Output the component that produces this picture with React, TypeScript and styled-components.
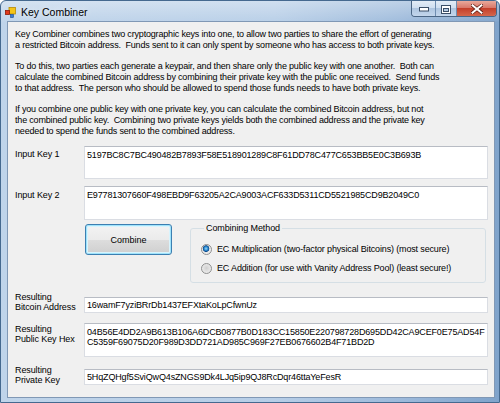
import { useState } from 'react';
import styled, { createGlobalStyle } from 'styled-components';

const FONT = `"Liberation Sans", Arial, sans-serif`;

const GlobalStyle = createGlobalStyle`
    html, body {
        margin: 0;
        padding: 0;
        background: #ffffff;
    }
    * { box-sizing: border-box; }
`;

const description = [
    'Key Combiner combines two cryptographic keys into one, to allow two parties to share the effort of generating',
    'a restricted Bitcoin address.  Funds sent to it can only spent by someone who has access to both private keys.',
    '',
    'To do this, two parties each generate a keypair, and then share only the public key with one another.  Both can',
    'calculate the combined Bitcoin address by combining their private key with the public one received.  Send funds',
    'to that address.  The person who should be allowed to spend those funds needs to have both private keys.',
    '',
    'If you combine one public key with one private key, you can calculate the combined Bitcoin address, but not',
    'the combined public key.  Combining two private keys yields both the combined address and the private key',
    'needed to spend the funds sent to the combined address.',
].join('\n');

const methods = [
    { id: 'mult', text: 'EC Multiplication (two-factor physical Bitcoins) (most secure)' },
    { id: 'add', text: 'EC Addition (for use with Vanity Address Pool) (least secure!)' },
];

const AppIcon = () => (
    <svg width="11" height="11" viewBox="0 0 11 11">
        <rect x="4" y="0.5" width="6.5" height="6.5" fill="#f5c518" stroke="#b78a06" strokeWidth="0.8" />
        <rect x="0.5" y="3.5" width="4" height="4" fill="#e2391c" stroke="#8d1a08" strokeWidth="0.8" />
        <rect x="5.5" y="7.5" width="3" height="3" fill="#3a7bd5" stroke="#1d4a8a" strokeWidth="0.6" />
    </svg>
);

const App = () => {
    const [method, setMethod] = useState('mult');

    return (
        <>
            <GlobalStyle />
            <StyledWindow>
                <StyledTitleBar>
                    <StyledTitleIcon><AppIcon /></StyledTitleIcon>
                    <StyledTitle>Key Combiner</StyledTitle>
                    <StyledCaption>
                        <StyledCaptionButton $w={24}>
                            <svg width="10" height="5" viewBox="0 0 10 5">
                                <rect x="0.5" y="0.5" width="9" height="3.5" fill="#fff" stroke="#3b4f68" strokeWidth="1" />
                            </svg>
                        </StyledCaptionButton>
                        <StyledCaptionButton $w={21}>
                            <svg width="10" height="9" viewBox="0 0 10 9">
                                <rect x="0.5" y="0.5" width="9" height="8" fill="none" stroke="#3b4f68" strokeWidth="1" />
                                <rect x="1.5" y="1.5" width="7" height="6" fill="none" stroke="#fff" strokeWidth="1" />
                                <rect x="1.5" y="1.5" width="7" height="1.6" fill="#fff" />
                                <rect x="2.5" y="3.5" width="5" height="3" fill="none" stroke="#3b4f68" strokeWidth="1" />
                            </svg>
                        </StyledCaptionButton>
                        <StyledCloseButton>
                            <svg width="12" height="10" viewBox="0 0 12 10">
                                <path d="M1 1 L11 9 M11 1 L1 9" stroke="#5a1a10" strokeWidth="3.4" strokeLinecap="square" />
                                <path d="M1.5 1.3 L10.5 8.7 M10.5 1.3 L1.5 8.7" stroke="#ffffff" strokeWidth="2" strokeLinecap="square" />
                            </svg>
                        </StyledCloseButton>
                    </StyledCaption>
                </StyledTitleBar>
                <StyledClient>
                    <StyledDescription>{description}</StyledDescription>
                    <StyledForm>
                        <StyledRow $top={0}>
                            <StyledLabel $offset={2.6}>Input Key 1</StyledLabel>
                            <StyledTextBox $h={33}>5197BC8C7BC490482B7893F58E518901289C8F61DD78C477C653BB5E0C3B693B</StyledTextBox>
                        </StyledRow>
                        <StyledRow $top={7}>
                            <StyledLabel $offset={3.6}>Input Key 2</StyledLabel>
                            <StyledTextBox $h={34}>E97781307660F498EBD9F63205A2CA9003ACF633D5311CD5521985CD9B2049C0</StyledTextBox>
                        </StyledRow>
                        <StyledActionRow>
                            <StyledButton type="button">Combine</StyledButton>
                            <StyledGroup>
                                <StyledLegend>Combining Method</StyledLegend>
                                {methods.map((m) => (
                                    <StyledRadioRow key={m.id} onClick={() => setMethod(m.id)}>
                                        <StyledRadio $checked={method === m.id} />
                                        <span>{m.text}</span>
                                    </StyledRadioRow>
                                ))}
                            </StyledGroup>
                        </StyledActionRow>
                        <StyledRow $top={14}>
                            <StyledLabel $offset={-5.5}>{'Resulting\nBitcoin Address'}</StyledLabel>
                            <StyledTextBox $h={16} $single>16wamF7yziBRrDb1437EFXtaKoLpCfwnUz</StyledTextBox>
                        </StyledRow>
                        <StyledRow $top={10}>
                            <StyledLabel $offset={0.5}>{'Resulting\nPublic Key Hex'}</StyledLabel>
                            <StyledTextBox $h={34}>
                                {'04B56E4DD2A9B613B106A6DCB0877B0D183CC15850E220798728D695DD42CA9CEF0E75AD54F\nC5359F69075D20F989D3DD721AD985C969F27EB0676602B4F71BD2D'}
                            </StyledTextBox>
                        </StyledRow>
                        <StyledRow $top={12}>
                            <StyledLabel $offset={-4.5}>{'Resulting\nPrivate Key'}</StyledLabel>
                            <StyledTextBox $h={16} $single>5HqZQHgf5SviQwQ4sZNGS9Dk4LJq5ip9QJ8RcDqr46ttaYeFesR</StyledTextBox>
                        </StyledRow>
                    </StyledForm>
                </StyledClient>
            </StyledWindow>
        </>
    );
};

const StyledWindow = styled.div`
    width: 500px;
    height: 403px;
    display: flex;
    flex-direction: column;
    border: 1px solid #45698f;
    border-radius: 6px 6px 0 0;
    background:
        linear-gradient(180deg, rgba(255,255,255,0.35) 0px, rgba(255,255,255,0.05) 20px, rgba(255,255,255,0) 21px),
        linear-gradient(90deg, #bfd4ea 0%, #b7cee7 55%, #9dbadb 80%, #7fa3cb 100%);
    overflow: hidden;
`;

const StyledTitleBar = styled.div`
    height: 20px;
    display: flex;
    align-items: center;
    padding-left: 4px;
    flex-shrink: 0;
`;

const StyledTitleIcon = styled.div`
    width: 11px;
    height: 11px;
    display: flex;
    margin-top: 2px;
`;

const StyledTitle = styled.div`
    font-family: ${FONT};
    font-size: 10.5px;
    color: #000;
    margin-left: 5px;
    margin-top: 2px;
    text-shadow: 0 0 6px rgba(255,255,255,0.9);
`;

const StyledCaption = styled.div`
    margin-left: auto;
    margin-right: 2px;
    align-self: flex-start;
    display: flex;
    height: 16px;
    border: 1px solid #4a6584;
    border-top: none;
    border-radius: 0 0 4px 4px;
    overflow: hidden;
`;

const StyledCaptionButton = styled.div<{ $w: number }>`
    width: ${(p) => p.$w}px;
    height: 100%;
    display: flex;
    align-items: center;
    justify-content: center;
    padding-top: 1px;
    background: linear-gradient(180deg, #e3ecf6 0%, #d0dff0 45%, #afc6e0 50%, #c3d6ec 100%);
    border-right: 1px solid #6f8db0;
`;

const StyledCloseButton = styled.div`
    width: 39px;
    height: 100%;
    display: flex;
    align-items: center;
    justify-content: center;
    padding-top: 1px;
    background: linear-gradient(180deg, #e9a99b 0%, #d9786a 45%, #c4402b 50%, #d5664b 100%);
`;

const StyledClient = styled.div`
    flex: 1;
    margin: 0 4px 4px 6px;
    background: #f0f0f0;
    border: 1px solid #8098b5;
    padding: 7px 6px 0 7px;
    font-family: ${FONT};
    font-size: 9px;
    color: #000;
    display: flex;
    flex-direction: column;
`;

const StyledDescription = styled.div`
    white-space: pre;
    line-height: 10.75px;
    letter-spacing: -0.18px;
`;

const StyledForm = styled.div`
    margin-top: 9.5px;
    display: flex;
    flex-direction: column;
`;

const StyledRow = styled.div<{ $top: number }>`
    display: grid;
    grid-template-columns: 69px 1fr;
    align-items: start;
    margin-top: ${(p) => p.$top}px;
`;

const StyledLabel = styled.div<{ $offset: number }>`
    white-space: pre;
    line-height: 10.75px;
    margin-top: ${(p) => p.$offset}px;
    letter-spacing: -0.1px;
`;

const StyledTextBox = styled.div<{ $h: number; $single?: boolean }>`
    height: ${(p) => p.$h}px;
    background: #fff;
    border: 1px solid #dadde3;
    border-top-color: #b8bcc4;
    padding: ${(p) => (p.$single ? '0 2px' : '2.5px 2px 0')};
    line-height: ${(p) => (p.$single ? `${p.$h - 2}px` : '10.75px')};
    white-space: pre;
    overflow: hidden;
    letter-spacing: -0.15px;
`;

const StyledActionRow = styled.div`
    display: flex;
    align-items: flex-start;
    padding-left: 70px;
    gap: 18px;
`;

const StyledButton = styled.button`
    width: 87px;
    height: 31px;
    margin-top: 4px;
    font-family: ${FONT};
    font-size: 9px;
    color: #000;
    border: 1px solid #3c7fb1;
    border-radius: 3px;
    box-shadow: inset 0 0 0 1px #9fe3fb, inset 0 0 0 2px #d9f4fd;
    background: linear-gradient(180deg, #f3f3f3 0%, #ebebeb 50%, #dddddd 51%, #cfcfcf 100%);
    padding: 0;
    cursor: pointer;
`;

const StyledGroup = styled.fieldset`
    flex: 1;
    margin: 3px 2px 0 0;
    height: 60px;
    border: 1px solid #d5dfe5;
    border-radius: 3px;
    padding: 6px 0 0 10px;
    min-width: 0;
`;

const StyledLegend = styled.legend`
    padding: 0 2px;
    margin-left: 3px;
    line-height: 10.75px;
    font-size: 9px;
    letter-spacing: -0.1px;
`;

const StyledRadioRow = styled.div`
    display: flex;
    align-items: center;
    gap: 5px;
    height: 19px;
    letter-spacing: -0.15px;
    cursor: default;
`;

const StyledRadio = styled.span<{ $checked: boolean }>`
    width: 11px;
    height: 11px;
    border-radius: 50%;
    border: 1px solid #8e8f8f;
    background: ${(p) =>
        p.$checked
            ? 'radial-gradient(circle at 45% 40%, #9fd6f5 0, #2c8ed4 1.8px, #0d4a8c 3px, #e6e6e6 3.6px, #f4f4f4 100%)'
            : 'radial-gradient(circle at 50% 45%, #cfcfcf 0, #e1e1e1 3px, #f4f4f4 100%)'};
    flex-shrink: 0;
`;

export default App;
